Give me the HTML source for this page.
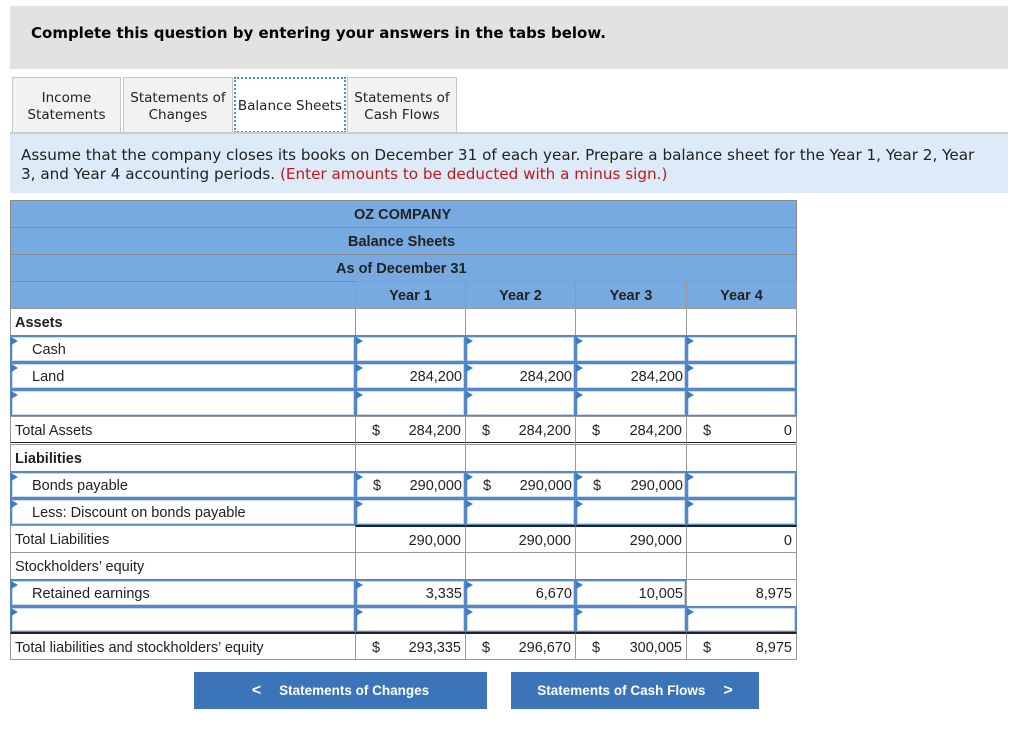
<!DOCTYPE html>
<html><head><meta charset="utf-8"><style>
body{margin:0;width:1024px;height:733px;background:#fff;font-family:"Liberation Sans",Arial,sans-serif;position:relative;overflow:hidden}
.a{position:absolute;box-sizing:border-box}
.hdr{left:10px;top:6px;width:998px;height:63px;background:#e2e2e2;font-family:"DejaVu Sans",Verdana,sans-serif;font-weight:bold;font-size:15px;padding:18px 0 0 21px}
.tab{top:77px;height:55px;background:#f2f2f2;border:1px solid #c8c8c8;border-bottom:none;font-family:"DejaVu Sans",Verdana,sans-serif;font-size:13.5px;text-align:center;display:flex;align-items:center;justify-content:center;line-height:17px;color:#222;padding-top:3px}
.tab.on{background:#fff;border:2px dotted #4a90d9;height:56px}
.instr{left:10px;top:132px;width:998px;height:61px;background:#dcebf7;border-top:2px solid #ccc;font-family:"DejaVu Sans",Verdana,sans-serif;font-size:15.2px;padding:12px 0 0 11px;line-height:18.5px;color:#222;white-space:nowrap}
.red{color:#c4161c}
.bh{left:10px;width:787px;background:#76aae0;border:1px solid #888;font-weight:bold;font-size:14.5px;color:#222;text-align:center;line-height:29px}
.c{border:1px solid #999;font-size:14.5px;color:#222;line-height:28px;padding:0 4px;white-space:nowrap}
.in{border:2px solid #5688c4;box-shadow:inset 0 0 0 1px #c9daf0}
.in::before{content:"";position:absolute;left:0;top:0;border-left:7px solid #3b7ac8;border-top:4px solid transparent;border-bottom:4px solid transparent;transform:translate(-1px,0)}
.r{text-align:right}
.d{position:absolute;left:16px}
.btn{top:672px;height:37px;background:#3b74b9;color:#fff;font-weight:bold;font-size:13.5px;display:flex;align-items:center;justify-content:center}
</style></head><body>
<div class="a hdr">Complete this question by entering your answers in the tabs below.</div>
<div class="a tab" style="left:12px;width:109px">Income<br>Statements</div>
<div class="a tab" style="left:123px;width:110px">Statements of<br>Changes</div>
<div class="a tab on" style="left:234px;width:112px">Balance Sheets</div>
<div class="a tab" style="left:347px;width:110px">Statements of<br>Cash Flows</div>
<div class="a instr">Assume that the company closes its books on December 31 of each year. Prepare a balance sheet for the Year 1, Year 2, Year<br>3, and Year 4 accounting periods. <span class="red">(Enter amounts to be deducted with a minus sign.)</span></div>

<div class="a bh" style="top:200px;height:28px"><span style="position:absolute;left:343px">OZ COMPANY</span></div>
<div class="a bh" style="top:227px;height:28px"><span style="position:absolute;left:337px">Balance Sheets</span></div>
<div class="a bh" style="top:254px;height:28px"><span style="position:absolute;left:325px">As of December 31</span></div>
<div class="a bh" style="top:281px;height:28px"></div>
<div class="a c" style="left:355px;top:281px;width:111px;height:28px;background:#76aae0;font-weight:bold;text-align:center">Year 1</div>
<div class="a c" style="left:465px;top:281px;width:111px;height:28px;background:#76aae0;font-weight:bold;text-align:center">Year 2</div>
<div class="a c" style="left:575px;top:281px;width:112px;height:28px;background:#76aae0;font-weight:bold;text-align:center">Year 3</div>
<div class="a c" style="left:686px;top:281px;width:111px;height:28px;background:#76aae0;font-weight:bold;text-align:center">Year 4</div>

<div class="a c" style="left:10px;top:308px;width:346px;height:28px;font-weight:bold">Assets</div>
<div class="a c" style="left:355px;top:308px;width:111px;height:28px"></div>
<div class="a c" style="left:465px;top:308px;width:111px;height:28px"></div>
<div class="a c" style="left:575px;top:308px;width:112px;height:28px"></div>
<div class="a c" style="left:686px;top:308px;width:111px;height:28px"></div>

<div class="a c in" style="left:10px;top:335px;width:346px;height:28px;padding-left:20px;line-height:26px">Cash</div>
<div class="a c in" style="left:355px;top:335px;width:111px;height:28px"></div>
<div class="a c in" style="left:465px;top:335px;width:111px;height:28px"></div>
<div class="a c in" style="left:575px;top:335px;width:112px;height:28px"></div>
<div class="a c in" style="left:686px;top:335px;width:111px;height:28px"></div>

<div class="a c in" style="left:10px;top:362px;width:346px;height:28px;padding-left:20px;line-height:26px">Land</div>
<div class="a c in r" style="left:355px;top:362px;width:111px;height:28px;line-height:26px;padding-right:2px">284,200</div>
<div class="a c in r" style="left:465px;top:362px;width:111px;height:28px;line-height:26px;padding-right:2px">284,200</div>
<div class="a c in r" style="left:575px;top:362px;width:112px;height:28px;line-height:26px;padding-right:2px">284,200</div>
<div class="a c in" style="left:686px;top:362px;width:111px;height:28px"></div>

<div class="a c in" style="left:10px;top:389px;width:346px;height:28px"></div>
<div class="a c in" style="left:355px;top:389px;width:111px;height:28px"></div>
<div class="a c in" style="left:465px;top:389px;width:111px;height:28px"></div>
<div class="a c in" style="left:575px;top:389px;width:112px;height:28px"></div>
<div class="a c in" style="left:686px;top:389px;width:111px;height:28px"></div>

<div class="a c" style="left:10px;top:416px;width:346px;height:29px;border-bottom:3px double #222">Total Assets</div>
<div class="a c r" style="left:355px;top:416px;width:111px;height:29px;border-bottom:3px double #222"><span class="d">$</span>284,200</div>
<div class="a c r" style="left:465px;top:416px;width:111px;height:29px;border-bottom:3px double #222"><span class="d">$</span>284,200</div>
<div class="a c r" style="left:575px;top:416px;width:112px;height:29px;border-bottom:3px double #222"><span class="d">$</span>284,200</div>
<div class="a c r" style="left:686px;top:416px;width:111px;height:29px;border-bottom:3px double #222"><span class="d">$</span>0</div>

<div class="a c" style="left:10px;top:444px;width:346px;height:28px;font-weight:bold">Liabilities</div>
<div class="a c" style="left:355px;top:444px;width:111px;height:28px"></div>
<div class="a c" style="left:465px;top:444px;width:111px;height:28px"></div>
<div class="a c" style="left:575px;top:444px;width:112px;height:28px"></div>
<div class="a c" style="left:686px;top:444px;width:111px;height:28px"></div>

<div class="a c in" style="left:10px;top:471px;width:346px;height:28px;padding-left:20px;line-height:26px">Bonds payable</div>
<div class="a c in r" style="left:355px;top:471px;width:111px;height:28px;line-height:26px;padding-right:2px"><span class="d">$</span>290,000</div>
<div class="a c in r" style="left:465px;top:471px;width:111px;height:28px;line-height:26px;padding-right:2px"><span class="d">$</span>290,000</div>
<div class="a c in r" style="left:575px;top:471px;width:112px;height:28px;line-height:26px;padding-right:2px"><span class="d">$</span>290,000</div>
<div class="a c in" style="left:686px;top:471px;width:111px;height:28px"></div>

<div class="a c in" style="left:10px;top:498px;width:346px;height:28px;padding-left:20px;line-height:26px">Less: Discount on bonds payable</div>
<div class="a c in" style="left:355px;top:498px;width:111px;height:28px"></div>
<div class="a c in" style="left:465px;top:498px;width:111px;height:28px"></div>
<div class="a c in" style="left:575px;top:498px;width:112px;height:28px"></div>
<div class="a c in" style="left:686px;top:498px;width:111px;height:28px"></div>

<div class="a c" style="left:10px;top:525px;width:346px;height:28px">Total Liabilities</div>
<div class="a c r" style="left:355px;top:525px;width:111px;height:28px;border-top:2px solid #222">290,000</div>
<div class="a c r" style="left:465px;top:525px;width:111px;height:28px;border-top:2px solid #222">290,000</div>
<div class="a c r" style="left:575px;top:525px;width:112px;height:28px;border-top:2px solid #222">290,000</div>
<div class="a c r" style="left:686px;top:525px;width:111px;height:28px;border-top:2px solid #222">0</div>

<div class="a c" style="left:10px;top:552px;width:346px;height:28px">Stockholders’ equity</div>
<div class="a c" style="left:355px;top:552px;width:111px;height:28px"></div>
<div class="a c" style="left:465px;top:552px;width:111px;height:28px"></div>
<div class="a c" style="left:575px;top:552px;width:112px;height:28px"></div>
<div class="a c" style="left:686px;top:552px;width:111px;height:28px"></div>

<div class="a c in" style="left:10px;top:579px;width:346px;height:28px;padding-left:20px;line-height:26px">Retained earnings</div>
<div class="a c in r" style="left:355px;top:579px;width:111px;height:28px;line-height:26px;padding-right:2px">3,335</div>
<div class="a c in r" style="left:465px;top:579px;width:111px;height:28px;line-height:26px;padding-right:2px">6,670</div>
<div class="a c in r" style="left:575px;top:579px;width:112px;height:28px;line-height:26px;padding-right:2px">10,005</div>
<div class="a c r" style="left:686px;top:579px;width:111px;height:28px">8,975</div>

<div class="a c in" style="left:10px;top:606px;width:346px;height:27px"></div>
<div class="a c in" style="left:355px;top:606px;width:111px;height:27px"></div>
<div class="a c in" style="left:465px;top:606px;width:111px;height:27px"></div>
<div class="a c in" style="left:575px;top:606px;width:112px;height:27px"></div>
<div class="a c in" style="left:686px;top:606px;width:111px;height:27px"></div>

<div class="a c" style="left:10px;top:632px;width:346px;height:28px;border-top:2px solid #222">Total liabilities and stockholders’ equity</div>
<div class="a c r" style="left:355px;top:632px;width:111px;height:28px;border-top:2px solid #222"><span class="d">$</span>293,335</div>
<div class="a c r" style="left:465px;top:632px;width:111px;height:28px;border-top:2px solid #222"><span class="d">$</span>296,670</div>
<div class="a c r" style="left:575px;top:632px;width:112px;height:28px;border-top:2px solid #222"><span class="d">$</span>300,005</div>
<div class="a c r" style="left:686px;top:632px;width:111px;height:28px;border-top:2px solid #222"><span class="d">$</span>8,975</div>

<div class="a btn" style="left:194px;width:293px"><span style="font-size:16px;margin-right:18px">&lt;</span>Statements of Changes</div>
<div class="a btn" style="left:511px;width:248px">Statements of Cash Flows<span style="font-size:16px;margin-left:18px">&gt;</span></div>
</body></html>
